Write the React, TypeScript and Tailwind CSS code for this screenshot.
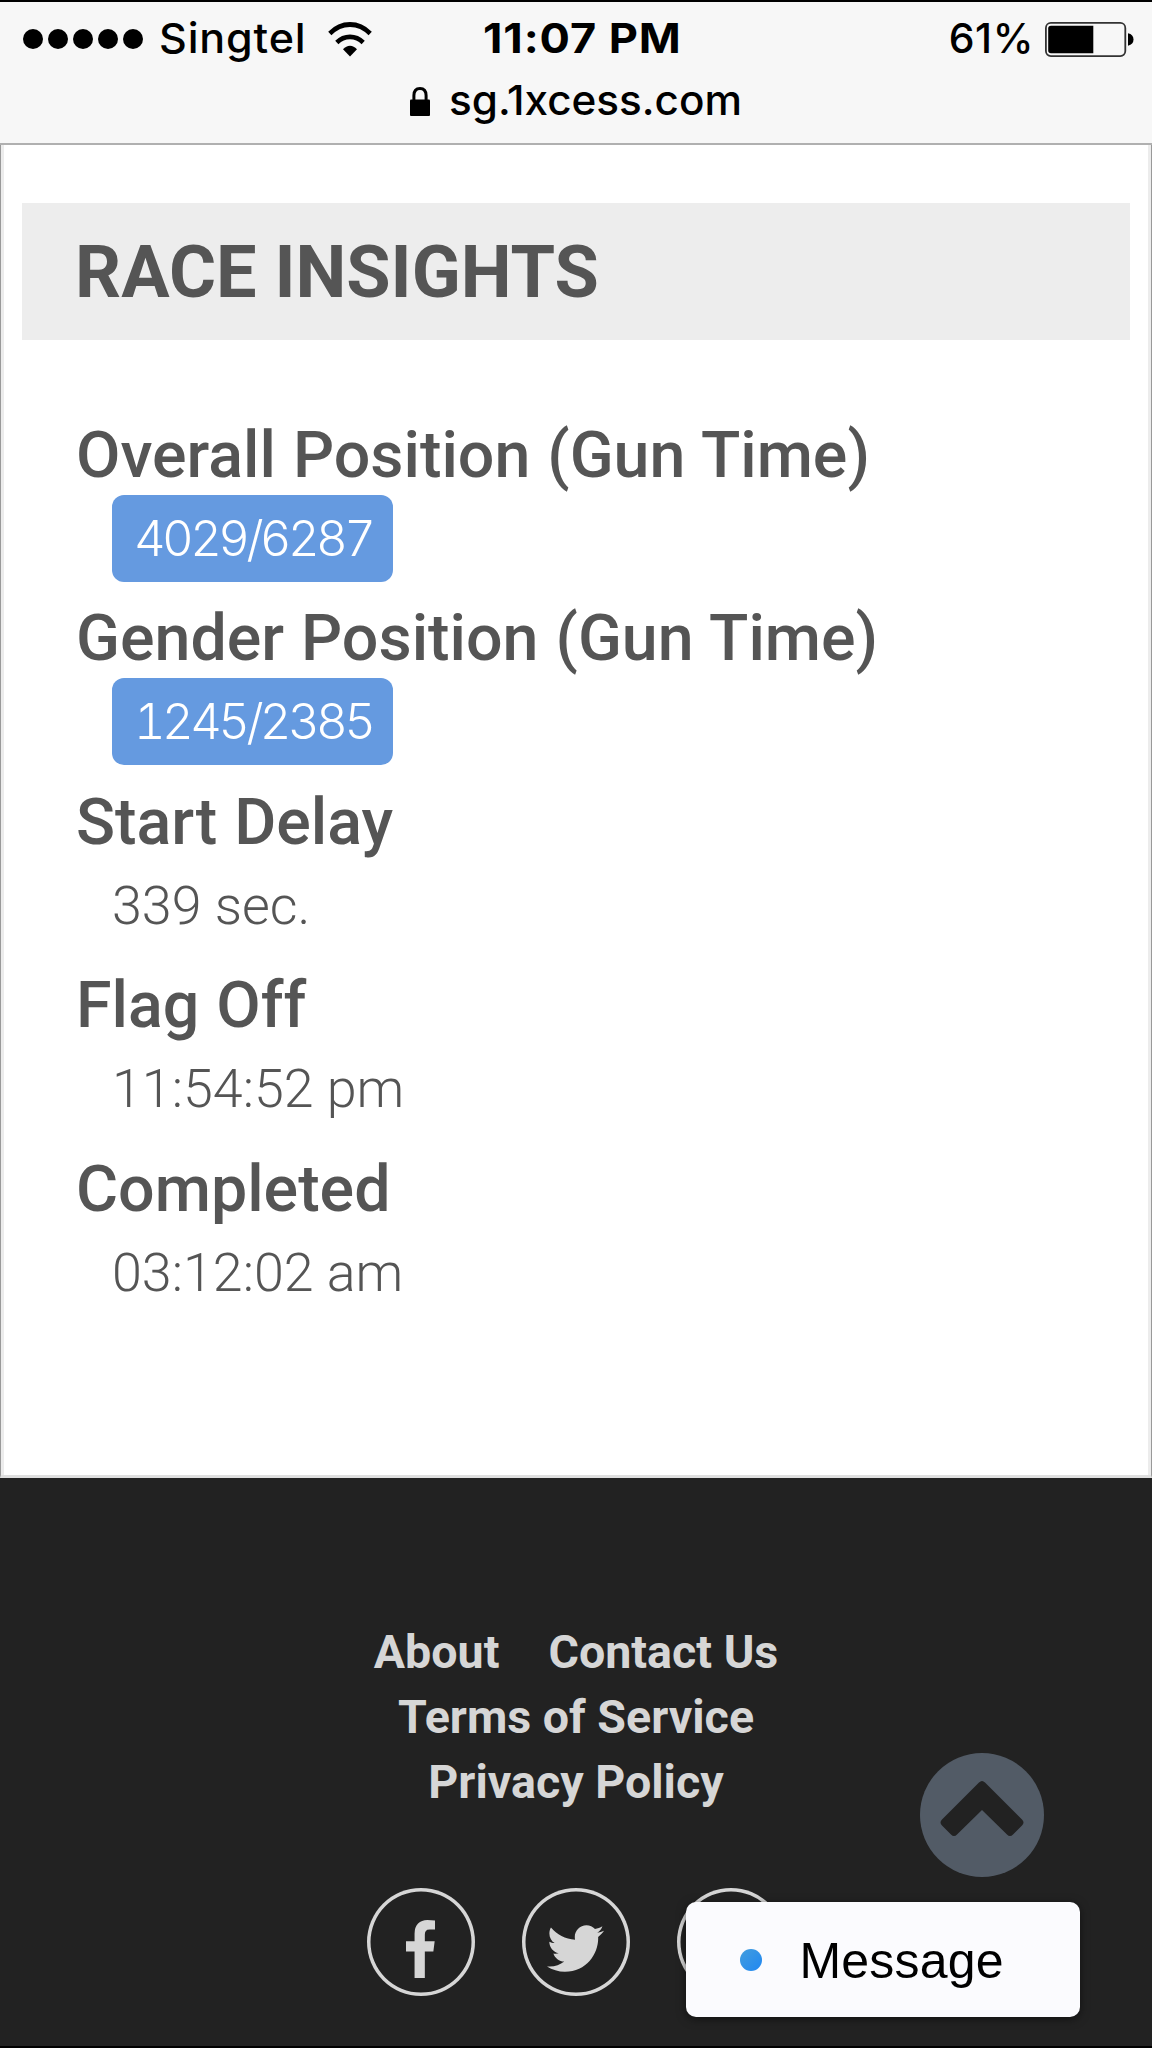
import { FaTwitter } from "react-icons/fa"
import { clsx } from "clsx"

interface Insight {
  label: string
  value: string
  badge?: boolean
}

const insights: Insight[] = [
  { label: "Overall Position (Gun Time)", value: "4029/6287", badge: true },
  { label: "Gender Position (Gun Time)", value: "1245/2385", badge: true },
  { label: "Start Delay", value: "339 sec." },
  { label: "Flag Off", value: "11:54:52 pm" },
  { label: "Completed", value: "03:12:02 am" },
]

function WifiIcon() {
  return (
    <svg width="44" height="35" viewBox="0 0 44 33" preserveAspectRatio="none" fill="none" stroke="#000" strokeWidth="4.6">
      <path d="M1.8 10.8 Q10.5 2.3 22 2.3 T42.2 10.8" />
      <path d="M8.8 19.4 Q14.4 14 22 14 T35.2 19.4" />
      <path d="M15 25.6 Q18.2 22.3 22 22.3 T29 25.6 L22 32.6Z" fill="#000" stroke="none" />
    </svg>
  )
}

function LockIcon() {
  return (
    <svg width="20" height="29" viewBox="0 0 20 29">
      <path d="M3.9 14 V8.6 Q3.9 1.5 10 1.5 T16.1 8.6 V14" fill="none" stroke="#000" strokeWidth="3" />
      <rect y="12.5" width="20" height="16.5" rx="1" />
    </svg>
  )
}

function BatteryIcon() {
  return (
    <svg width="89" height="35" viewBox="0 0 89 35">
      <rect x="0.9" y="0.9" width="79.4" height="33.2" rx="5" fill="none" stroke="#333" strokeWidth="1.8" />
      <path d="M6 3.7 H48.3 V31.3 H6 Q3.2 31.3 3.2 28.5 V6.5 Q3.2 3.7 6 3.7Z" />
      <path d="M83 11.3 Q88.5 12.5 88.5 17.5 T83 23.7Z" />
    </svg>
  )
}

function StatusBar() {
  return (
    <header className="h-[145px] border-t-2 border-b-2 border-t-black border-b-[#b0b0b0] bg-[#f7f7f7] font-['Inter'] text-[41px] text-black">
      <div className="grid h-[74px] grid-cols-[484px_1fr_auto] items-center pr-[18px] pl-[23px]">
        <div className="flex items-center">
          <div className="flex gap-[5px]">
            {[0, 1, 2, 3, 4].map((dot) => (
              <span key={dot} className="size-5 rounded-full bg-black" />
            ))}
          </div>
          <span className="ml-[16px] w-[169px] origin-left scale-x-[1.05] font-medium tracking-[0.8px] whitespace-nowrap">
            Singtel
          </span>
          <WifiIcon />
        </div>
        <span className="-ml-[24px] origin-left scale-x-[1.1] font-bold tracking-[0.8px] whitespace-nowrap">11:07 PM</span>
        <div className="flex items-center gap-[11px]">
          <span className="font-medium tracking-[0.6px]">61%</span>
          <BatteryIcon />
        </div>
      </div>
      <div className="flex h-[50px] items-center pl-[410px]">
        <LockIcon />
        <span className="ml-[19px] origin-left scale-x-[1.03] font-medium whitespace-nowrap">sg.1xcess.com</span>
      </div>
    </header>
  )
}

function InsightRow({ label, value, badge }: Insight) {
  return (
    <div>
      <dt className="h-20 text-[64.5px] leading-[80px] font-medium [word-spacing:1px] whitespace-nowrap">{label}</dt>
      <dd
        className={clsx(
          "h-[87px] leading-[87px] font-light whitespace-nowrap",
          badge
            ? "ml-[36px] w-[280.5px] rounded-xl bg-[#659ae0] pl-[22px] font-['Inter'] text-[49px] tracking-[-3.6px] text-white tabular-nums"
            : "ml-[36px] text-[53.8px]",
        )}
      >
        {value}
      </dd>
    </div>
  )
}

function Footer() {
  const circle = "flex size-[108px] items-center justify-center rounded-full shadow-[inset_0_0_0_3.5px_#d6d6d6]"

  return (
    <footer className="relative h-[570px] overflow-hidden border-b-2 border-b-black bg-[#222] pt-[142px] text-[#d6d6d6]">
      <nav className="flex flex-col items-center text-[46.6px] leading-[65px] font-bold whitespace-nowrap">
        <div className="flex gap-[49px]">
          <a>About</a>
          <a>Contact Us</a>
        </div>
        <a>Terms of Service</a>
        <a>Privacy Policy</a>
      </nav>
      <div className="mt-[73px] flex justify-center gap-[47px]">
        <a className={circle}>
          <svg width="29" height="58" viewBox="95 -1536 864 1664" preserveAspectRatio="none" fill="currentColor" className="mt-[13px] mr-[2px]">
            <path
              transform="scale(1 -1)"
              d="M959 1524v-264h-157q-86 0-116-36t-30-108v-189h293l-39-296h-254v-759h-306v759h-255v296h255v218q0 186 104 288.5t277 102.5q147 0 228-12z"
            />
          </svg>
        </a>
        <a className={circle}>
          <FaTwitter className="mt-[13px] mr-px size-[57px]" />
        </a>
        <a className={circle} />
      </div>

      {/* Scroll to top */}
      <button className="absolute top-[275px] left-[919.5px] size-[124px] rounded-full bg-[#525b66]">
        <svg width="124" height="124" viewBox="0 0 124 124" fill="#222">
          <path d="M59 29.5 Q62 26.5 65 29.5 L102 66.5 Q105 69.5 102 72.5 L93 81.5 Q90 84.5 87 81.5 L62 57 L37 81.5 Q34 84.5 31 81.5 L22 72.5 Q19 69.5 22 66.5Z" />
        </svg>
      </button>

      {/* Chat launcher */}
      <button className="absolute top-[424px] left-[685.5px] flex h-[115px] w-[394.5px] items-center rounded-[10px] bg-[#fbfbfe] pl-[54px] font-['Liberation_Sans'] text-[50px] text-black shadow-[0_2px_10px_rgba(0,0,0,0.5)]">
        <span className="size-[22px] rounded-full bg-linear-to-br from-[#429ddd] to-[#1f87f2]" />
        <span className="mt-[3px] ml-[38px] tracking-[0.2px]">Message</span>
      </button>
    </footer>
  )
}

export default function App() {
  return (
    <div className="h-[2048px] w-[1152px] overflow-hidden bg-white font-['Roboto'] text-[#555]">
      <StatusBar />
      <main className="h-[1333px] border-x border-b-[3px] border-x-[#999] border-b-[#dfdfdf]">
        <div className="h-full border-x-[3px] border-[#ececec] pt-[58px]">
          <h1 className="mx-[18px] h-[137px] bg-[#ededed] pl-[53px] text-[72px] leading-[139px] font-bold">
            RACE INSIGHTS
          </h1>
          <dl className="mt-[74.5px] flex flex-col gap-[16.6px] pl-[72px]">
            {insights.map((item) => (
              <InsightRow key={item.label} {...item} />
            ))}
          </dl>
        </div>
      </main>
      <Footer />
    </div>
  )
}
